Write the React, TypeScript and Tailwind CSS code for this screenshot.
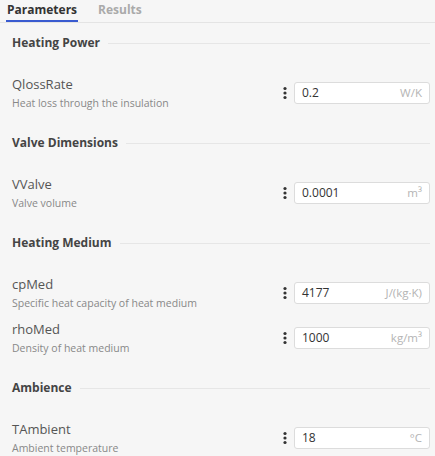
import React from "react";

type Param = { name: string; desc: string; value: string; unit: React.ReactNode };
type Section = { title: string; params: Param[] };

const sections: Section[] = [
  {
    title: "Heating Power",
    params: [{ name: "QlossRate", desc: "Heat loss through the insulation", value: "0.2", unit: "W/K" }],
  },
  {
    title: "Valve Dimensions",
    params: [{ name: "VValve", desc: "Valve volume", value: "0.0001", unit: <>m³</> }],
  },
  {
    title: "Heating Medium",
    params: [
      { name: "cpMed", desc: "Specific heat capacity of heat medium", value: "4177", unit: "J/(kg·K)" },
      { name: "rhoMed", desc: "Density of heat medium", value: "1000", unit: <>kg/m³</> },
    ],
  },
  {
    title: "Ambience",
    params: [{ name: "TAmbient", desc: "Ambient temperature", value: "18", unit: "°C" }],
  },
];

function Dots() {
  return (
    <svg width="6" height="14" viewBox="0 0 6 14" className="shrink-0">
      <circle cx="3" cy="2.5" r="1.6" fill="#333" />
      <circle cx="3" cy="7" r="1.6" fill="#333" />
      <circle cx="3" cy="11.5" r="1.6" fill="#333" />
    </svg>
  );
}

function ParamRow({ p }: { p: Param }) {
  return (
    <div className="flex h-10 items-center">
      <div className="flex min-w-0 flex-1 flex-col">
        <span className="text-[13px] leading-5 text-[#555]">{p.name}</span>
        <span className="text-[10.5px] leading-[19px] text-[#888]">{p.desc}</span>
      </div>
      <div className="flex items-center gap-[6px]">
        <Dots />
        <div className="flex h-[22px] w-[136px] items-center justify-between rounded-[3px] border border-[#dcdcdc] bg-white pl-[7px] pr-[7px]">
          <span className="text-[12px] text-[#333]">{p.value}</span>
          <span className="text-[11.5px] text-[#b4b4b4]">{p.unit}</span>
        </div>
      </div>
    </div>
  );
}

export default function App() {
  return (
    <div
      className="min-h-[456px] w-[435px] bg-[#f6f6f6]"
      style={{ fontFamily: '"Open Sans", "Noto Sans", sans-serif' }}
    >
      <div className="flex h-[23px] items-end gap-5 border-b border-[#e4e4e4] pl-[6px]">
        <div className="flex h-full flex-col justify-between border-b-2 border-[#3a5bd0] px-[1px] pt-[2px]">
          <span className="text-[12px] font-bold leading-4 text-[#333]">Parameters</span>
        </div>
        <div className="flex h-full flex-col pt-[2px]">
          <span className="text-[12px] font-bold leading-4 text-[#aaa]">Results</span>
        </div>
      </div>
      <div className="flex flex-col gap-[22px] pl-[12px] pr-[5px] pt-[12px]">
        {sections.map((s) => (
          <div key={s.title} className="flex flex-col gap-[22px]">
            <div className="flex h-4 items-center gap-2">
              <span className="text-[12px] font-bold leading-4 text-[#444]">{s.title}</span>
              <div className="h-px flex-1 bg-[#e6e6e6]" />
            </div>
            <div className="flex flex-col gap-[5px]">
              {s.params.map((p) => (
                <ParamRow key={p.name} p={p} />
              ))}
            </div>
          </div>
        ))}
      </div>
    </div>
  );
}
